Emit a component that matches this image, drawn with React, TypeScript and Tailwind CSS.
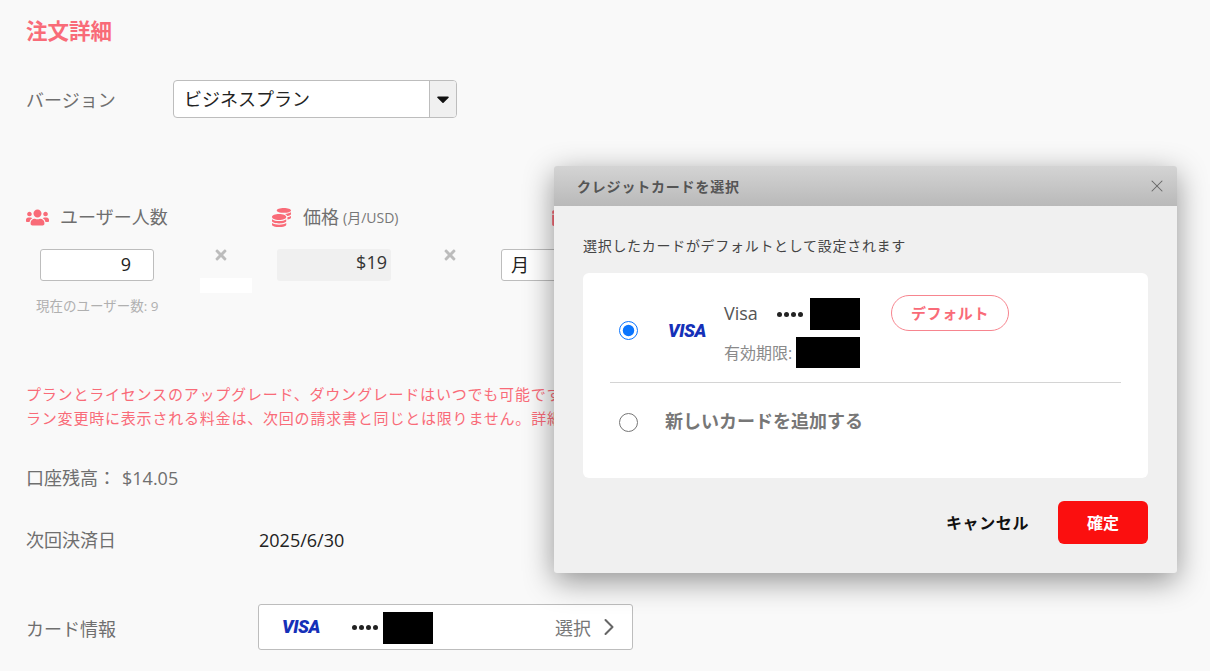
import { FaCalendarAlt, FaCaretDown, FaCoins, FaTimes, FaUsers } from "react-icons/fa";
import { ChevronRight, X } from "lucide-react";

const fontStack = "font-['Open_Sans','Noto_Sans_CJK_JP',sans-serif]";

function VisaLogo() {
  return (
    <span className="inline-block w-[39px] font-['Roboto',sans-serif] text-[18px] leading-none font-black italic tracking-[-0.4px] text-[#1530b8]">
      VISA
    </span>
  );
}

function Dots() {
  return (
    <span className="flex gap-[2px]">
      <i className="w-[5px] h-[5px] rounded-full bg-[#222]" />
      <i className="w-[5px] h-[5px] rounded-full bg-[#222]" />
      <i className="w-[5px] h-[5px] rounded-full bg-[#222]" />
      <i className="w-[5px] h-[5px] rounded-full bg-[#222]" />
    </span>
  );
}

function CardModal() {
  return (
    <div className="absolute left-[554px] top-[166px] z-10 w-[623px] h-[407px] rounded-[3px] bg-[#f0f0f0] shadow-[0_8px_30px_rgba(0,0,0,0.42)] overflow-hidden">
      <div className="h-[40px] flex items-center justify-between pl-[23px] pr-[10px] bg-gradient-to-b from-[#d4d4d4] to-[#b9b9b9]">
        <span className="text-[14px] font-bold tracking-[0.8px] text-[#555]">クレジットカードを選択</span>
        <X size={20} strokeWidth={1.25} className="text-[#666]" />
      </div>
      <div className="px-[29px]">
        <p className="mt-[29px] h-[22px] text-[14px] leading-[22px] tracking-[0.7px] text-[#444]">
          選択したカードがデフォルトとして設定されます
        </p>
        <div className="mt-[16px] h-[205px] rounded-[6px] bg-white px-[27px]">
          <div className="h-[110px] flex items-center border-b border-[#d4d4d4]">
            <input type="radio" checked readOnly className="mt-[6px] ml-[9px] w-[19px] h-[19px] accent-[#0a75ff]" />
            <span className="mt-[6px] ml-[30px] flex items-center"><VisaLogo /></span>
            <div className="ml-[17px] w-[136px] self-start pt-[25px]">
              <div className="flex items-center h-[32px]">
                <span className="w-[53px] -mt-[2px] text-[18px] text-[#555]">Visa</span>
                <Dots />
                <span className="ml-[7px] w-[50px] h-[32px] bg-black" />
              </div>
              <div className="mt-[7px] flex items-center h-[31px]">
                <span className="w-[72px] text-[16px] text-[#8a8a8a]">有効期限:</span>
                <span className="w-[64px] h-[31px] bg-black" />
              </div>
            </div>
            <span className="ml-[31px] self-start mt-[22px] w-[118px] h-[36px] flex items-center justify-center rounded-full border border-[#f7858f] text-[15px] font-bold tracking-[0.6px] text-[#f96b78]">
              デフォルト
            </span>
          </div>
          <div className="h-[77px] flex items-center">
            <input type="radio" readOnly className="mt-[1px] ml-[9px] w-[19px] h-[19px]" />
            <span className="ml-[27px] text-[18px] font-bold text-[#777]">新しいカードを追加する</span>
          </div>
        </div>
        <div className="mt-[23px] flex items-center justify-end">
          <span className="text-[16px] font-bold tracking-[0.6px] text-[#111]">キャンセル</span>
          <button className="ml-[29px] w-[90px] h-[43px] rounded-[6px] bg-[#fb0f0f] text-[16px] font-bold text-white">
            確定
          </button>
        </div>
      </div>
    </div>
  );
}

export default function App() {
  return (
    <div className={`relative h-[671px] w-full overflow-hidden bg-[#f9f9f9] ${fontStack}`}>
      <div className="pl-[26px] pt-[17px]">
        <h1 className="h-[28px] text-[21.5px] leading-[28px] font-bold text-[#f96b78]">注文詳細</h1>

        {/* Version */}
        <div className="mt-[35px] flex items-center">
          <span className="w-[147px] pt-[2px] text-[18px] text-[#6f6f6f]">バージョン</span>
          <div className="w-[284px] h-[38px] flex rounded-[4px] border border-[#bdbdbd] bg-white overflow-hidden">
            <span className="flex-1 pl-[10px] text-[18px] leading-[37px] text-[#222]">ビジネスプラン</span>
            <span className="w-[27px] flex items-center justify-center border-l border-[#bdbdbd] bg-[#f0f0f0]">
              <FaCaretDown size={20} className="text-[#111]" />
            </span>
          </div>
        </div>

        {/* Price calc */}
        <div className="mt-[87px] h-[108px] flex">
          <div className="w-[174px]">
            <div className="h-[24px] flex items-center text-[18px] text-[#6f6f6f]">
              <FaUsers size={23} className="text-[#f96b78]" />
              <span className="ml-[11px]">ユーザー人数</span>
            </div>
            <div className="mt-[20px] ml-[14px] w-[114px] h-[32px] rounded-[3px] border border-[#bdbdbd] bg-white pr-[22px] text-right text-[18px] leading-[29px] text-[#222]">
              9
            </div>
            <p className="mt-[15px] ml-[10px] text-[13.5px] leading-[20px] text-[#b0b0b0]">現在のユーザー数: 9</p>
          </div>
          <div className="w-[72px]">
            <div className="mt-[42px] ml-[13px] h-[15px]">
              <FaTimes size={16} className="text-[#bcbcbc]" />
            </div>
            <div className="mt-[16px] w-[52px] h-[15px] bg-white" />
          </div>
          <div className="w-[170px]">
            <div className="h-[24px] flex items-center text-[18px] text-[#6f6f6f]">
              <FaCoins size={19} className="text-[#f96b78]" />
              <span className="ml-[12px]">価格</span>
              <span className="ml-[4px] text-[14px] text-[#777]">(月/USD)</span>
            </div>
            <div className="mt-[20px] ml-[5px] w-[114px] h-[32px] rounded-[3px] bg-[#f0f0f0] pr-[4px] text-right text-[18px] leading-[26px] text-[#333]">
              $19
            </div>
          </div>
          <div className="w-[59px]">
            <div className="mt-[42px] h-[15px]">
              <FaTimes size={16} className="text-[#bcbcbc]" />
            </div>
          </div>
          <div>
            <div className="ml-[50px] h-[24px] flex items-center text-[18px] text-[#6f6f6f]">
              <FaCalendarAlt size={18} className="text-[#f96b78]" />
              <span className="ml-[11px]">期間</span>
            </div>
            <div className="mt-[20px] w-[114px] h-[32px] rounded-[3px] border border-[#bdbdbd] bg-white pl-[9px] text-[18px] leading-[30px] text-[#222]">
              月
            </div>
          </div>
        </div>

        {/* Notice */}
        <p className="mt-[69px] w-[1000px] text-[15px] leading-[24px] tracking-[0.8px] text-[#f96b78]">
          プランとライセンスのアップグレード、ダウングレードはいつでも可能です。
          <br />
          ラン変更時に表示される料金は、次回の請求書と同じとは限りません。詳細はこちら。
        </p>

        <div className="mt-[36px] h-[24px] flex items-center text-[18px] text-[#6f6f6f]">
          口座残高： <span className="ml-[6px]">$14.05</span>
        </div>

        <div className="mt-[38px] h-[24px] flex items-center text-[18px]">
          <span className="w-[233px] text-[#6f6f6f]">次回決済日</span>
          <span className="text-[#222]">2025/6/30</span>
        </div>

        <div className="mt-[52px] flex items-center">
          <span className="w-[232px] pt-[4px] text-[18px] text-[#6f6f6f]">カード情報</span>
          <div className="w-[375px] h-[46px] flex items-center rounded-[3px] border border-[#bdbdbd] bg-white pl-[23px] pr-[9px]">
            <VisaLogo />
            <span className="ml-[31px]"><Dots /></span>
            <span className="ml-[5px] mt-[2px] w-[50px] h-[32px] bg-black" />
            <span className="ml-auto pt-[2px] text-[18px] text-[#777]">選択</span>
            <ChevronRight size={28} strokeWidth={1.75} className="ml-[4px] text-[#666]" />
          </div>
        </div>
      </div>

      <CardModal />
    </div>
  );
}
